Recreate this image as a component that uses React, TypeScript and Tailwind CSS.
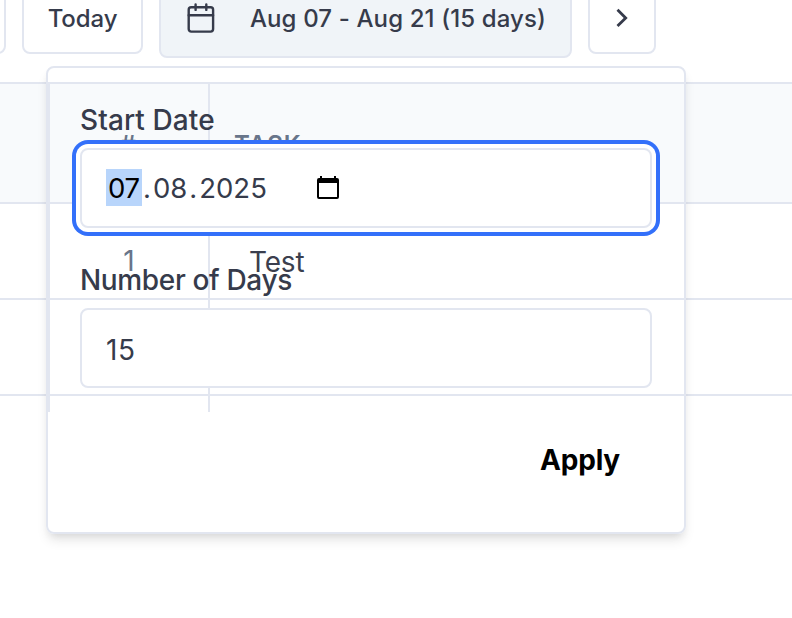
import React from "react";

function ToolbarButton({ className, children }: { className: string; children?: React.ReactNode }) {
  return (
    <button
      className={`flex shrink-0 items-center justify-center rounded-[8px] border-2 border-[#e2e6f0] text-2xl font-medium ${className}`}
    >
      {children}
    </button>
  );
}

function Toolbar() {
  return (
    <header className="-mt-5 flex h-[78px] items-center gap-4">
      <ToolbarButton className="-ml-[62px] h-[70px] w-[68px] bg-white" />
      <ToolbarButton className="h-[70px] w-[121px] bg-white">
        <span className="tracking-[-0.1px]">Today</span>
      </ToolbarButton>
      <ToolbarButton className="h-[78px] w-[413px] bg-[#f0f4f8]">
        <svg className="mr-[33px] size-8 shrink-0" viewBox="0 0 32 32" fill="none" stroke="currentColor" strokeWidth="2.4" strokeLinecap="round">
          <rect x="3.7" y="4.2" width="24.4" height="24.4" rx="2.5" />
          <path d="M3.7 12.3h24.4M10.6 1.5v5.4M21.3 1.5v5.4" />
        </svg>
        <span className="whitespace-nowrap tracking-[0.13px]">Aug 07 - Aug 21 (15 days)</span>
      </ToolbarButton>
      <ToolbarButton className="h-[70px] w-[68px] bg-white">
        <svg className="size-8" viewBox="0 0 32 32" fill="none" stroke="currentColor" strokeWidth="2.8">
          <path d="M11.5 6.7 19.7 14.9 11.5 23.1" />
        </svg>
      </ToolbarButton>
    </header>
  );
}

function Row({ height, cells }: { height: string; cells?: React.ReactNode }) {
  return (
    <div className={`flex border-b-2 border-[#e2e6f0] pl-12 ${height}`}>
      {cells ?? (
        <>
          <div className="w-[162px] border-x-2 border-[#e2e6f0]" />
          <div className="flex-1" />
        </>
      )}
    </div>
  );
}

function TaskTable() {
  return (
    <section className="mt-6 border-t-2 border-[#e2e6f0]">
      <Row
        height="h-[120px] bg-[#f8fafc]"
        cells={
          <>
            <div className="flex w-[162px] items-center justify-center border-x-2 border-[#e2e6f0] pr-0.5 pt-[3px] text-2xl font-semibold text-[#68758a]">#</div>
            <div className="flex items-center pl-6 pt-[3px] text-2xl font-semibold tracking-[1.1px] text-[#68758a]">TASK</div>
          </>
        }
      />
      <Row
        height="h-24"
        cells={
          <>
            <div className="flex w-[162px] items-center justify-center border-x-2 border-[#e2e6f0] pt-[20px] text-[28px] text-[#68758a]">1</div>
            <div className="flex items-center pl-[39px] pt-[22px] text-[28px] tracking-[-0.2px] text-[#3b3f4e]">Test</div>
          </>
        }
      />
      <Row height="h-24" />
      <div className="flex h-4 pl-12">
        <div className="w-[162px] border-x-2 border-[#e2e6f0]" />
      </div>
    </section>
  );
}

function DatePopover() {
  return (
    <div className="absolute left-[46px] top-[66px] flex h-[468px] w-[640px] flex-col rounded-[8px] border-2 border-[#e2e6f0] px-8 pt-8 shadow-[0_8px_12px_-2px_rgba(0,0,0,0.1),0_4px_8px_-4px_rgba(0,0,0,0.1)]">
      <label className="flex h-10 items-center text-[28px] font-medium tracking-[0.1px]">Start Date</label>
      <div className="mt-2 flex h-20 shrink-0 items-center rounded-[8px] border-2 border-[#e2e6f0] bg-white pl-6 text-[28px] shadow-[0_0_0_4px_#ffffff,0_0_0_8px_#3370fa]">
        <span className="-mt-px flex h-[37px] w-9 items-center justify-center bg-[#b8d5fb] pt-0.5 text-[27.5px] tracking-[-0.3px] text-black">07</span>
        <span className="ml-[1px] w-[126px] whitespace-nowrap pt-px text-[27.5px]">
          <span className="tracking-[2px]">.</span>
          <span>08</span>
          <span className="ml-[2px] tracking-[2px]">.</span>
          <span>2025</span>
        </span>
        <svg className="ml-[47px] size-6 text-black" viewBox="0 0 24 24" fill="currentColor">
          <path fillRule="evenodd" d="M4 1h2v2h12V1h2v2h1a2 2 0 0 1 2 2v17a2 2 0 0 1-2 2H3a2 2 0 0 1-2-2V5a2 2 0 0 1 2-2h1zM3 8v14h18V8z" transform="translate(0 -1)" />
        </svg>
      </div>
      <label className="mt-8 flex h-10 items-center text-[28px] font-medium tracking-[-0.35px]">Number of Days</label>
      <div className="mt-2 flex h-20 shrink-0 items-center rounded-[8px] border-2 border-[#e2e6f0] bg-white pl-6 pt-[3px] text-[28px] tracking-[0.6px]">15</div>
      <div className="mt-8 flex h-20 items-center justify-end pr-8">
        <button className="text-[28px] font-bold tracking-[-0.2px] text-black">Apply</button>
      </div>
    </div>
  );
}

export default function App() {
  return (
    <main className="relative h-[618px] w-[792px] overflow-hidden bg-white font-[Inter,sans-serif] text-[#363b4b]">
      <div className="flow-root">
        <Toolbar />
        <TaskTable />
      </div>
      <DatePopover />
    </main>
  );
}
